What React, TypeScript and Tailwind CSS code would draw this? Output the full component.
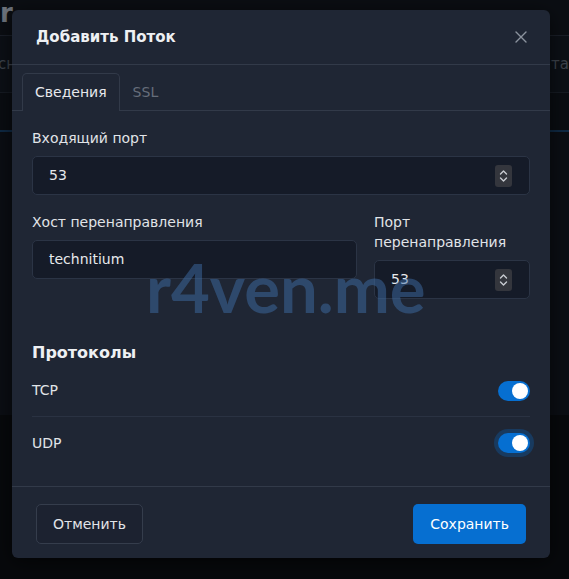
import React, { useState } from "react";

const font = { fontFamily: '"DejaVu Sans", "Liberation Sans", sans-serif' };

function Spinner() {
  return (
    <span className="flex h-[22px] w-[17px] items-center justify-center rounded-[3px] bg-[#34363d]">
      <svg width="9" height="14" viewBox="0 0 9 14" fill="none" stroke="#c9ccd2" strokeWidth="1.4" strokeLinecap="round" strokeLinejoin="round">
        <path d="M1.5 5 L4.5 2 L7.5 5" />
        <path d="M1.5 9 L4.5 12 L7.5 9" />
      </svg>
    </span>
  );
}

function NumberInput({ value }: { value: string }) {
  return (
    <div className="flex h-[39px] w-full items-center justify-between rounded-[5px] border border-[#2b3445] bg-[#151b28] pl-4 pr-[17px]">
      <span className="text-[14px] text-[#e7e9ec]">{value}</span>
      <Spinner />
    </div>
  );
}

function Toggle({ focused }: { focused?: boolean }) {
  const [on, setOn] = useState(true);
  return (
    <button
      onClick={() => setOn(!on)}
      className={
        "flex h-[20px] w-[32px] items-center rounded-full px-[2px] " +
        (on ? "justify-end bg-[#066fd1] " : "justify-start bg-[#3a4252] ") +
        (focused ? "shadow-[0_0_0_4px_rgba(6,111,209,0.28)]" : "")
      }
    >
      <span className="h-[16px] w-[16px] rounded-full bg-white" />
    </button>
  );
}

export default function App() {
  const [tab, setTab] = useState("info");

  return (
    <div className="relative h-[579px] w-[569px] overflow-hidden bg-[#0b0e13]" style={font}>
      {/* page behind the backdrop */}
      <div className="flex h-full flex-col">
        <div className="flex h-[36px] items-start border-b border-[#1a1f28]">
          <span className="-mt-[6px] text-[26px] font-bold text-[#6f757e]">r</span>
        </div>
        <div className="flex h-[57px] items-center justify-between border-b border-[#161b23] bg-[#0c1016]">
          <span className="-ml-[2px] text-[15px] text-[#3d434c]">сн</span>
          <span className="text-[15px] text-[#3d434c]">та</span>
        </div>
        <div className="h-[39px] border-b-2 border-[#0f2a45] bg-[#0a0d12]" />
        <div className="h-[283px] bg-[#0b0e14]" />
        <div className="grow bg-[#07090c]" />
      </div>

      {/* modal */}
      <div className="absolute left-[12px] top-[10px] flex h-[548px] w-[538px] flex-col rounded-[6px] bg-[#1f2634] shadow-[0_4px_20px_rgba(0,0,0,0.6)]">
        <div className="flex h-[55px] items-center justify-between border-b border-[#323a49] pl-[24px] pr-[23px]">
          <h2 className="text-[15px] font-bold text-[#eef0f3]">Добавить Поток</h2>
          <svg width="12" height="12" viewBox="0 0 12 12" stroke="#8c939e" strokeWidth="1.4" strokeLinecap="round">
            <path d="M1 1 L11 11 M11 1 L1 11" />
          </svg>
        </div>

        <div className="flex items-end border-b border-[#323a49] px-[10px] pt-[8px]">
          <button
            onClick={() => setTab("info")}
            className={
              "-mb-px flex h-[38px] items-center rounded-t-[5px] px-[12px] text-[14px] " +
              (tab === "info"
                ? "border border-b-0 border-[#323a49] bg-[#1f2634] text-[#e7e9ec]"
                : "text-[#666d7a]")
            }
          >
            Сведения
          </button>
          <button
            onClick={() => setTab("ssl")}
            className={
              "-mb-px flex h-[38px] items-center rounded-t-[5px] px-[13px] text-[14px] " +
              (tab === "ssl"
                ? "border border-b-0 border-[#323a49] bg-[#1f2634] text-[#e7e9ec]"
                : "text-[#666d7a]")
            }
          >
            SSL
          </button>
        </div>

        <div className="flex grow flex-col px-[20px] pt-[17px]">
          <label className="mb-[8px] text-[14px] leading-[20px] text-[#e1e4e8]">Входящий порт</label>
          <NumberInput value="53" />

          <div className="mt-[17px] flex gap-[17px]">
            <div className="flex w-[325px] shrink-0 flex-col">
              <label className="mb-[8px] text-[14px] leading-[20px] text-[#e1e4e8]">Хост перенаправления</label>
              <div className="flex h-[39px] items-center rounded-[5px] border border-[#2b3445] bg-[#151b28] pl-4">
                <span className="text-[14px] text-[#e7e9ec]">technitium</span>
              </div>
            </div>
            <div className="flex min-w-0 grow flex-col">
              <label className="mb-[8px] text-[14px] leading-[20px] text-[#e1e4e8]">Порт перенаправления</label>
              <NumberInput value="53" />
            </div>
          </div>

          <h3 className="mt-[43px] text-[16px] font-bold leading-[22px] text-[#eef0f3]">Протоколы</h3>
          <div className="mt-[1px] flex h-[52px] items-center justify-between border-b border-[#2a3242]">
            <span className="text-[14px] text-[#e1e4e8]">TCP</span>
            <Toggle />
          </div>
          <div className="flex h-[52px] items-center justify-between">
            <span className="text-[14px] text-[#e1e4e8]">UDP</span>
            <Toggle focused />
          </div>
        </div>

        <div className="flex h-[72px] shrink-0 items-start justify-between border-t border-[#323a49] px-[24px] pt-[17px]">
          <button className="h-[40px] rounded-[5px] border border-[#353d4c] bg-[#1c2230] px-[16px] text-[14px] text-[#e1e4e8]">
            Отменить
          </button>
          <button className="h-[40px] rounded-[5px] bg-[#066fd1] px-[17px] text-[14px] text-white">
            Сохранить
          </button>
        </div>
      </div>

      {/* watermark */}
      <div
        className="pointer-events-none absolute left-[146px] top-[249px] text-[67px] font-bold leading-[76px] text-[#3d6ca3]/50"
        style={{ fontFamily: "Lato, sans-serif" }}
      >
        r4ven.me
      </div>
    </div>
  );
}
